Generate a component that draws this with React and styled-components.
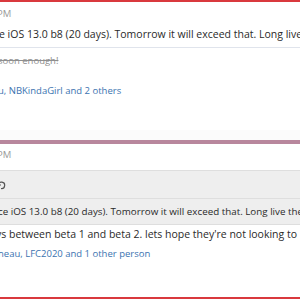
import React from 'react'
import styled, {createGlobalStyle} from 'styled-components'

const GlobalStyle = createGlobalStyle`
  html, body {
    margin: 0;
    padding: 0;
    background: #fff;
  }
  body {
    font-family: "Open Sans", "Segoe UI", sans-serif;
  }
`

const Page = styled.div`
  width: 300px;
  height: 300px;
  overflow: hidden;
  background: #fff;
  display: flex;
  flex-direction: column;
`

const Rule = styled.div`
  flex-shrink: 0;
  height: ${p => p.size || 1}px;
  background: ${p => p.color};
  margin-top: ${p => p.top || 0}px;
`

const Text = styled.div`
  flex-shrink: 0;
  height: 16px;
  line-height: 16px;
  white-space: nowrap;
  font-size: ${p => p.size || 10.5}px;
  color: ${p => p.color || '#2a2a2a'};
  margin-top: ${p => p.top || 0}px;
  margin-left: ${p => p.shift || 0}px;
`

const Struck = styled.span`
  text-decoration: line-through;
`

const Link = styled.span`
  color: #3b73b0;
`

const PostGap = styled.div`
  flex-shrink: 0;
  height: 10px;
  margin-top: 31px;
  background: #fbfbfb;
`

const Quote = styled.div`
  flex-shrink: 0;
  margin-top: 7px;
  background: #eeeeee;
  border-top: 1px solid #dedede;
  border-bottom: 1px solid #dedede;
`

const QuoteTitle = styled.div`
  height: 27px;
  display: flex;
  align-items: center;
  border-bottom: 1px solid #dedede;
`

const QuoteBody = styled.div`
  height: 25px;
  display: flex;
  align-items: center;
  white-space: nowrap;
  font-size: 9.8px;
  color: #2a2a2a;
  margin-left: -2px;
`

const UndoIcon = () => (
  <svg width="10" height="10" viewBox="0 0 10 10" style={{marginLeft: -4}}>
    <path d="M2 2 v3 h3" fill="none" stroke="#555" strokeWidth="1.2"/>
    <path d="M2.3 4.8 A3.2 3.2 0 1 1 5 8.5" fill="none" stroke="#555" strokeWidth="1.2"/>
  </svg>
)

export default function App() {
  return <Page>
    <GlobalStyle/>
    <Rule size={2} color="#d9393e"/>
    <Text color="#9a9a9a" size={9.5} top={4} shift={-3}>PM</Text>
    <Text top={4} shift={-1}>e iOS 13.0 b8 (20 days). Tomorrow it will exceed that. Long live the</Text>
    <Rule color="#e0e4ec" top={5}/>
    <Text color="#8f8f8f" size={9.5} top={5} shift={-2}><Struck>  soon enough!</Struck></Text>
    <Text size={9.5} top={14} shift={-2}><Link>u, NBKindaGirl and 2 others</Link></Text>
    <PostGap/>
    <Rule size={4} color="#b8879d"/>
    <Text color="#9a9a9a" size={9.5} top={3} shift={-3}>PM</Text>
    <Quote>
      <QuoteTitle><UndoIcon/></QuoteTitle>
      <QuoteBody>ce iOS 13.0 b8 (20 days). Tomorrow it will exceed that. Long live the</QuoteBody>
    </Quote>
    <Text top={1} shift={-4}>ys between beta 1 and beta 2. lets hope they're not looking to beat it</Text>
    <Text size={9.5} top={4} shift={-2}><Link>neau, LFC2020 and 1 other person</Link></Text>
    <Rule size={2} color="#d9393e" top={35}/>
  </Page>
}
